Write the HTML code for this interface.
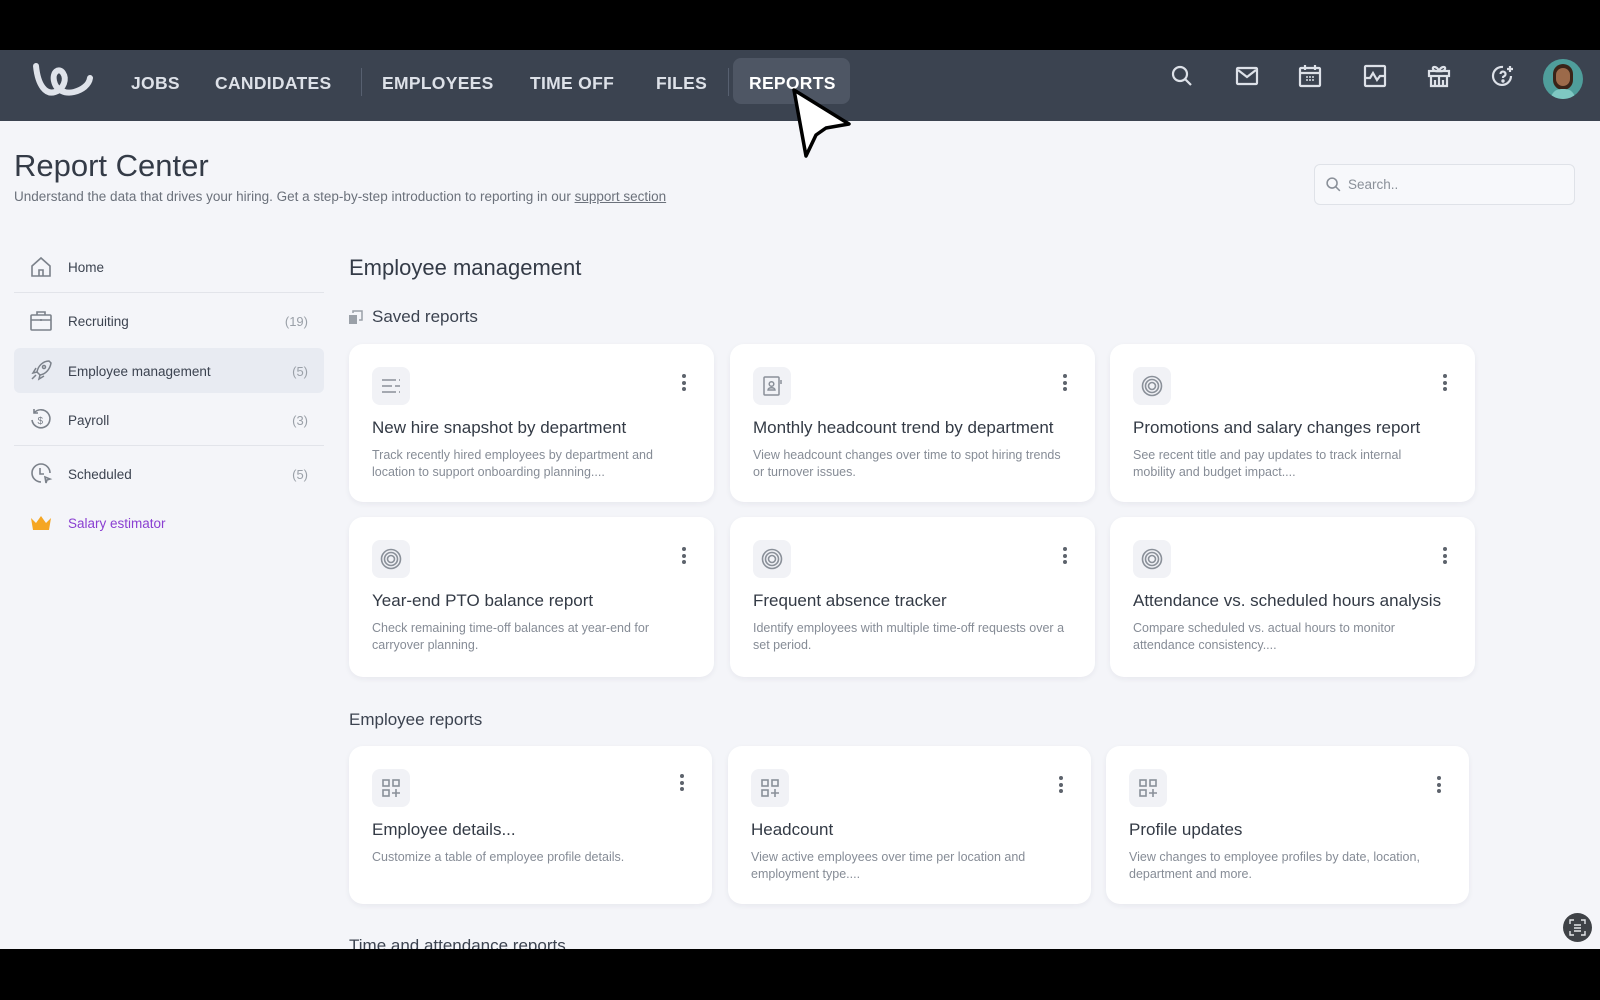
<!DOCTYPE html>
<html><head><meta charset="utf-8"><style>
*{box-sizing:border-box;margin:0;padding:0}
body{width:1600px;height:1000px;background:#000;font-family:"Liberation Sans",sans-serif;position:relative;overflow:hidden;color:#333a45}
.page{position:absolute;left:0;top:50px;width:1600px;height:899px;background:#f4f5f9;overflow:hidden}
.nav{position:absolute;left:0;top:0;width:1600px;height:71px;background:#3b4350}
.nav .it{position:absolute;top:23px;font-size:17.5px;font-weight:bold;color:#dde1e8;letter-spacing:.3px}
.nav .dv{position:absolute;top:18px;width:1px;height:28px;background:#576070}
.rep{position:absolute;left:733px;top:8px;width:117px;height:46px;background:#4e5664;border-radius:8px}
.ic{position:absolute;top:14px}
.a{position:absolute}
.side{position:absolute;font-size:13.5px;color:#3c4350}
.cnt{position:absolute;right:0;color:#9aa0a8;font-size:13px}
.card{position:absolute;background:#fff;border-radius:14px;box-shadow:0 2px 6px rgba(30,40,60,.06)}
.card .ib{position:absolute;left:23px;top:23px;width:38px;height:38px;background:#f1f2f6;border-radius:8px}
.card .ib svg{position:absolute;left:7px;top:7px}
.card h3{position:absolute;left:23px;top:74px;font-size:17px;font-weight:normal;color:#333a45;white-space:nowrap}
.card p{position:absolute;left:23px;top:103px;width:314px;font-size:12.5px;line-height:16.5px;color:#868c96}
.keb{position:absolute;right:28px;top:30px;width:4px}
.keb i{display:block;width:4px;height:4px;border-radius:2px;background:#5d636c;margin-bottom:2.5px}
.sec{position:absolute;font-size:17px;color:#3c4350}
</style></head><body>
<div class="page">
<div class="nav">
<svg class="a" style="left:28px;top:8px" width="70" height="50" viewBox="28 58 70 50"><path d="M36,66 C38,86 46,95 55,92 C64,89 67,79 63,73 C59,67 52,72 54,81 C56,91 66,94 74,92 C82,90 89,85 90,78" fill="none" stroke="#dfe3ea" stroke-width="6" stroke-linecap="round"/></svg>
<div class="it" style="left:131px">JOBS</div>
<div class="it" style="left:215px">CANDIDATES</div>
<div class="dv" style="left:361px"></div>
<div class="it" style="left:382px">EMPLOYEES</div>
<div class="it" style="left:530px">TIME OFF</div>
<div class="it" style="left:656px">FILES</div>
<div class="dv" style="left:728px"></div>
<div class="rep"></div>
<div class="it" style="left:749px;color:#fff">REPORTS</div>
<svg class="ic" style="left:1170px" width="24" height="24" viewBox="0 0 24 24" fill="none" stroke="#dde1e8" stroke-width="2.2"><circle cx="10" cy="10" r="7"/><path d="M15 15l6 6"/></svg>
<svg class="ic" style="left:1235px" width="24" height="24" viewBox="0 0 24 24" fill="none" stroke="#dde1e8" stroke-width="2.2"><rect x="2" y="4" width="20" height="16" rx="1"/><path d="M3 6l9 7 9-7"/></svg>
<svg class="ic" style="left:1298px" width="24" height="24" viewBox="0 0 24 24" fill="none" stroke="#dde1e8" stroke-width="2.2"><rect x="2" y="4" width="20" height="18" rx="1"/><path d="M7 1v5M17 1v5M2 9h20"/><path d="M8 13h2M11 13h2M14 13h2M8 16h2M11 16h2M14 16h2" stroke-width="1.6"/></svg>
<svg class="ic" style="left:1363px" width="24" height="24" viewBox="0 0 24 24" fill="none" stroke="#dde1e8" stroke-width="2.2"><rect x="2" y="2" width="20" height="20" rx="1"/><path d="M2 14h5l3-5 4 7 3-4h5"/></svg>
<svg class="ic" style="left:1427px" width="24" height="24" viewBox="0 0 24 24" fill="none" stroke="#dde1e8" stroke-width="2.2"><rect x="2" y="7" width="20" height="5"/><path d="M4 12v10h16V12M12 12v10M8 22v-6M16 22v-6"/><path d="M12 7C10 2 5 2 6 5s6 2 6 2zM12 7c2-5 7-5 6-2s-6 2-6 2z"/></svg>
<svg class="ic" style="left:1491px" width="24" height="24" viewBox="0 0 24 24" fill="none" stroke="#dde1e8" stroke-width="2.2"><path d="M20 12a9 9 0 1 1-8-9"/><path d="M9.5 10a2.5 2.5 0 1 1 3 2.5c-.6.3-.5 1-.5 1.5"/><circle cx="12" cy="17" r=".6" fill="#dde1e8"/><path d="M19 2v6M16 5h6"/></svg>
<div class="a" style="left:1543px;top:9px;width:40px;height:40px;border-radius:20px;background:#4f9e9b;overflow:hidden"><div class="a" style="left:10px;top:5px;width:20px;height:26px;border-radius:10px;background:#3a2418"></div><div class="a" style="left:13px;top:9px;width:14px;height:18px;border-radius:7px;background:#9c6a4a"></div><div class="a" style="left:8px;top:30px;width:24px;height:14px;border-radius:10px 10px 0 0;background:#7fc8c2"></div></div>
</div>

<div class="a" style="left:14px;top:98px;font-size:31px;color:#343b47">Report Center</div>
<div class="a" style="left:14px;top:139px;font-size:13.5px;color:#6b717b">Understand the data that drives your hiring. Get a step-by-step introduction to reporting in our <span style="text-decoration:underline">support section</span></div>
<div class="a" style="left:1314px;top:114px;width:261px;height:41px;border:1px solid #dfe2e8;border-radius:6px;background:#f7f8fb"><svg class="a" style="left:10px;top:11px" width="17" height="17" viewBox="0 0 24 24" fill="none" stroke="#8a9099" stroke-width="2.2"><circle cx="10" cy="10" r="7"/><path d="M15 15l6 6"/></svg><span class="a" style="left:33px;top:12px;font-size:13.5px;color:#8a9099">Search..</span></div>

<div class="a" style="left:14px;top:242px;width:310px;height:1px;background:#e2e4ea"></div>
<div class="a" style="left:14px;top:298px;width:310px;height:45px;background:#e8ebf2;border-radius:6px"></div>
<div class="a" style="left:14px;top:395px;width:310px;height:1px;background:#e2e4ea"></div>
<svg class="a" style="left:29px;top:205px" width="24" height="24" viewBox="0 0 24 24" fill="none" stroke="#7b818a" stroke-width="1.6"><path d="M3 11L12 3l9 8v10H3z"/><path d="M10 21v-6h4v6"/></svg>
<div class="side" style="left:68px;top:210px;width:240px">Home</div>
<svg class="a" style="left:29px;top:259px" width="24" height="24" viewBox="0 0 24 24" fill="none" stroke="#7b818a" stroke-width="1.6"><rect x="2" y="6" width="20" height="15" rx="1"/><path d="M8 6V3h8v3M2 11h20M12 10v2"/></svg>
<div class="side" style="left:68px;top:264px;width:240px">Recruiting<span class="cnt">(19)</span></div>
<svg class="a" style="left:29px;top:308px" width="24" height="24" viewBox="0 0 24 24" fill="none" stroke="#7b818a" stroke-width="1.5"><path d="M20 3c-6 0-11 5-12 11l3 3c6-1 10-6 11-12z"/><path d="M8 14l-4 1 3-5M11 17l-1 4 5-3M3 21l4-4"/><circle cx="15" cy="9" r="1.5"/></svg>
<div class="side" style="left:68px;top:314px;width:240px">Employee management<span class="cnt">(5)</span></div>
<svg class="a" style="left:29px;top:358px" width="24" height="24" viewBox="0 0 24 24" fill="none" stroke="#7b818a" stroke-width="1.6"><path d="M5 5a9 9 0 1 1-2 7"/><path d="M5 1v4h4" /><text x="8.5" y="16" font-size="10" fill="#7b818a" stroke="none" font-family="Liberation Sans">$</text></svg>
<div class="side" style="left:68px;top:363px;width:240px">Payroll<span class="cnt">(3)</span></div>
<svg class="a" style="left:29px;top:411px" width="24" height="24" viewBox="0 0 24 24" fill="none" stroke="#7b818a" stroke-width="1.6"><path d="M12 21a9 9 0 1 1 9-9"/><path d="M11 7v6h4M16 16l5 2-3 1-1 3z"/></svg>
<div class="side" style="left:68px;top:417px;width:240px">Scheduled<span class="cnt">(5)</span></div>
<svg class="a" style="left:30px;top:465px" width="22" height="16" viewBox="0 0 22 16"><path d="M1 3l5 5 5-7 5 7 5-5-2 12H3z" fill="#f5a623"/></svg>
<div class="side" style="left:68px;top:466px;color:#8a3fd1">Salary estimator</div>

<div class="a" style="left:349px;top:205px;font-size:22px;color:#343b47">Employee management</div>
<svg class="a" style="left:348px;top:259px" width="16" height="16" viewBox="0 0 16 16"><rect x="1" y="6" width="8" height="9" fill="#9aa0a8"/><path d="M5 4V2h9v9h-3" fill="none" stroke="#9aa0a8" stroke-width="1.5"/></svg>
<div class="sec" style="left:372px;top:257px">Saved reports</div>

<div class="card" style="left:349px;top:294px;width:365px;height:158px"><div class="ib"><svg width="24" height="24" viewBox="0 0 24 24" fill="none" stroke="#8a9099" stroke-width="1.5"><path d="M3 6h14M20 6h1M3 12h10M16 12h5M3 18h14M20 18h1"/></svg></div><div class="keb"><i></i><i></i><i></i></div><h3>New hire snapshot by department</h3><p>Track recently hired employees by department and location to support onboarding planning....</p></div>
<div class="card" style="left:730px;top:294px;width:365px;height:158px"><div class="ib"><svg width="24" height="24" viewBox="0 0 24 24" fill="none" stroke="#8a9099" stroke-width="1.5"><rect x="4" y="3" width="15" height="18" rx="1"/><circle cx="11.5" cy="10" r="2.3"/><path d="M8 16c0-3 7-3 7 0zM21 6v4"/></svg></div><div class="keb"><i></i><i></i><i></i></div><h3>Monthly headcount trend by department</h3><p>View headcount changes over time to spot hiring trends or turnover issues.</p></div>
<div class="card" style="left:1110px;top:294px;width:365px;height:158px"><div class="ib"><svg width="24" height="24" viewBox="0 0 24 24" fill="none" stroke="#8a9099" stroke-width="1.6"><circle cx="12" cy="12" r="9.5"/><circle cx="12" cy="12" r="6.5"/><circle cx="12" cy="12" r="3.5"/></svg></div><div class="keb"><i></i><i></i><i></i></div><h3>Promotions and salary changes report</h3><p>See recent title and pay updates to track internal mobility and budget impact....</p></div>

<div class="card" style="left:349px;top:467px;width:365px;height:160px"><div class="ib"><svg width="24" height="24" viewBox="0 0 24 24" fill="none" stroke="#8a9099" stroke-width="1.6"><circle cx="12" cy="12" r="9.5"/><circle cx="12" cy="12" r="6.5"/><circle cx="12" cy="12" r="3.5"/></svg></div><div class="keb"><i></i><i></i><i></i></div><h3>Year-end PTO balance report</h3><p>Check remaining time-off balances at year-end for carryover planning.</p></div>
<div class="card" style="left:730px;top:467px;width:365px;height:160px"><div class="ib"><svg width="24" height="24" viewBox="0 0 24 24" fill="none" stroke="#8a9099" stroke-width="1.6"><circle cx="12" cy="12" r="9.5"/><circle cx="12" cy="12" r="6.5"/><circle cx="12" cy="12" r="3.5"/></svg></div><div class="keb"><i></i><i></i><i></i></div><h3>Frequent absence tracker</h3><p>Identify employees with multiple time-off requests over a set period.</p></div>
<div class="card" style="left:1110px;top:467px;width:365px;height:160px"><div class="ib"><svg width="24" height="24" viewBox="0 0 24 24" fill="none" stroke="#8a9099" stroke-width="1.6"><circle cx="12" cy="12" r="9.5"/><circle cx="12" cy="12" r="6.5"/><circle cx="12" cy="12" r="3.5"/></svg></div><div class="keb"><i></i><i></i><i></i></div><h3>Attendance vs. scheduled hours analysis</h3><p>Compare scheduled vs. actual hours to monitor attendance consistency....</p></div>

<div class="sec" style="left:349px;top:660px">Employee reports</div>
<div class="card" style="left:349px;top:696px;width:363px;height:158px"><div class="ib"><svg width="24" height="24" viewBox="0 0 24 24" fill="none" stroke="#8a9099" stroke-width="1.6"><rect x="4" y="4" width="6" height="6"/><rect x="14" y="4" width="6" height="6"/><rect x="4" y="14" width="6" height="6"/><path d="M17 13v8M13 17h8"/></svg></div><div class="keb" style="top:28px"><i></i><i></i><i></i></div><h3>Employee details...</h3><p>Customize a table of employee profile details.</p></div>
<div class="card" style="left:728px;top:696px;width:363px;height:158px"><div class="ib"><svg width="24" height="24" viewBox="0 0 24 24" fill="none" stroke="#8a9099" stroke-width="1.6"><rect x="4" y="4" width="6" height="6"/><rect x="14" y="4" width="6" height="6"/><rect x="4" y="14" width="6" height="6"/><path d="M17 13v8M13 17h8"/></svg></div><div class="keb"><i></i><i></i><i></i></div><h3>Headcount</h3><p>View active employees over time per location and employment type....</p></div>
<div class="card" style="left:1106px;top:696px;width:363px;height:158px"><div class="ib"><svg width="24" height="24" viewBox="0 0 24 24" fill="none" stroke="#8a9099" stroke-width="1.6"><rect x="4" y="4" width="6" height="6"/><rect x="14" y="4" width="6" height="6"/><rect x="4" y="14" width="6" height="6"/><path d="M17 13v8M13 17h8"/></svg></div><div class="keb"><i></i><i></i><i></i></div><h3>Profile updates</h3><p>View changes to employee profiles by date, location, department and more.</p></div>

<div class="sec" style="left:349px;top:886px">Time and attendance reports</div>
<div class="a" style="left:1563px;top:863px;width:29px;height:29px;border-radius:15px;background:#3f4247"><svg class="a" style="left:6px;top:6px" width="17" height="17" viewBox="0 0 17 17" fill="none" stroke="#e5e7ea" stroke-width="1.4"><path d="M1 5V1h4M12 1h4v4M16 12v4h-4M5 16H1v-4M5 6h7M5 9h7M5 12h7"/></svg></div>

<svg class="a" style="left:786px;top:36px" width="72" height="76" viewBox="786 86 72 76"><path d="M794,90 L849,124 L826,128 L816,135 L806,156 Z" fill="#fff" stroke="#000" stroke-width="3.5" stroke-linejoin="round"/></svg>
</div>
</body></html>
